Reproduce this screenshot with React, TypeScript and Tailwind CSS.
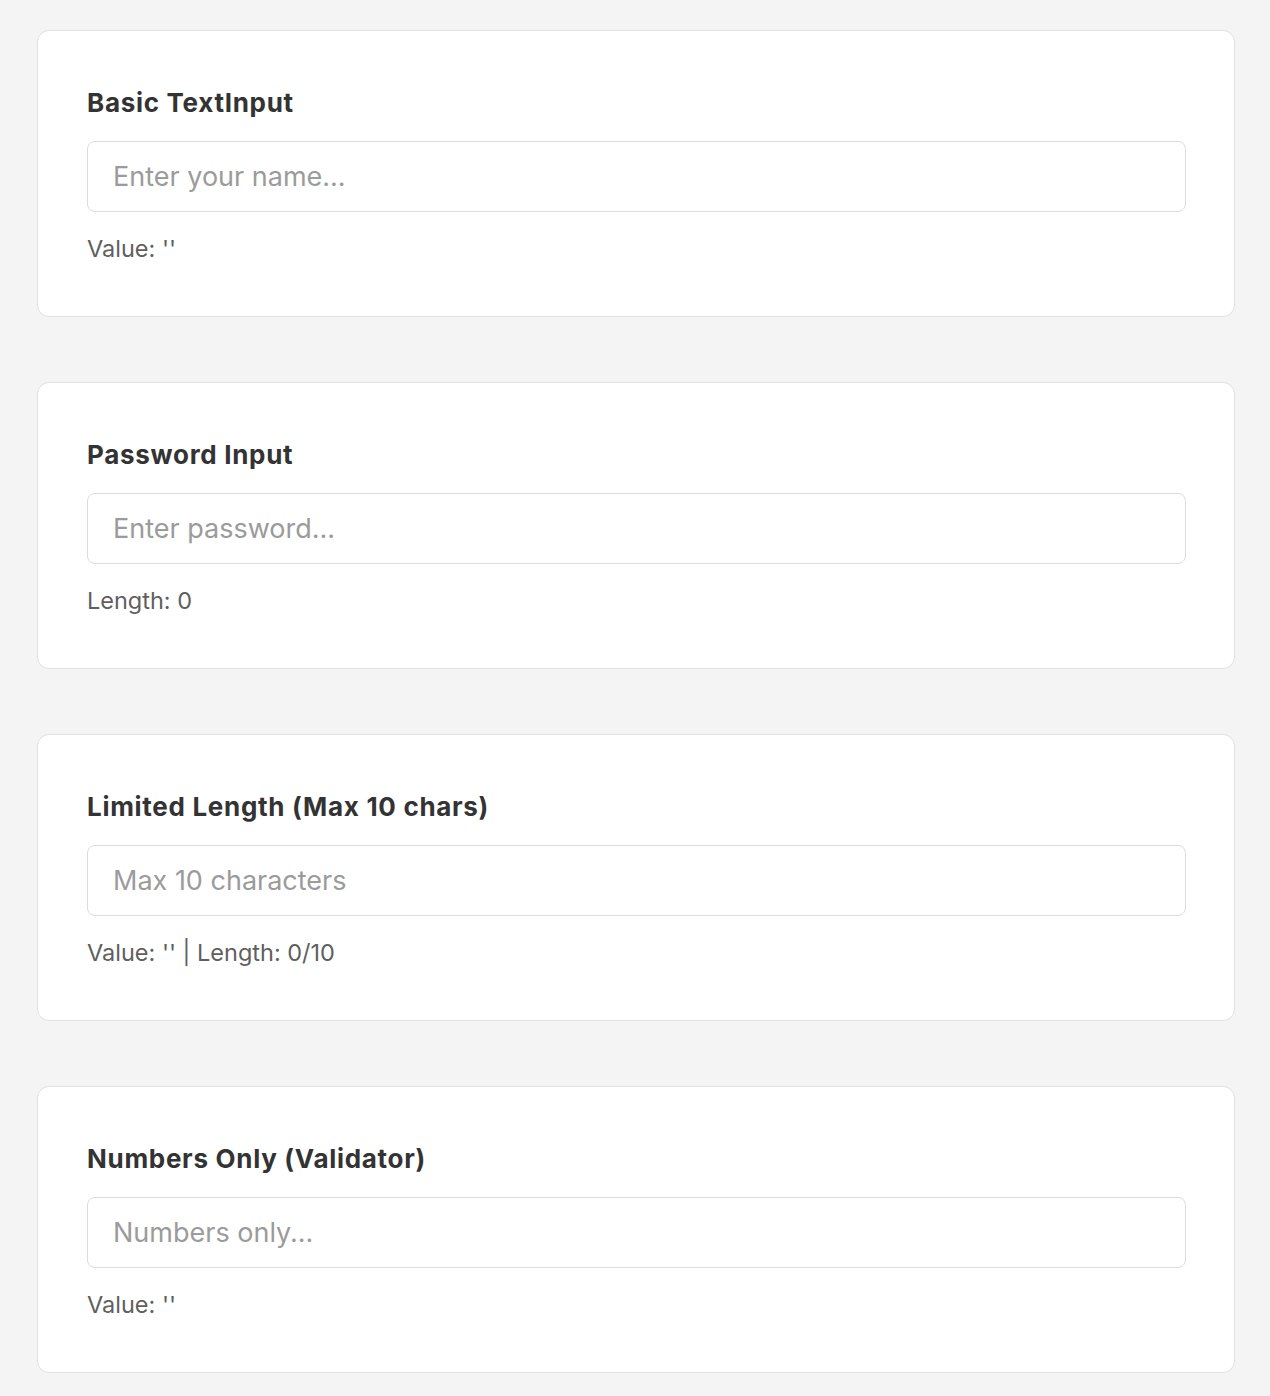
import React, { useState } from 'react';

interface FieldCardProps {
    title: string;
    placeholder: string;
    type?: string;
    children: (value: string) => React.ReactNode;
    maxLength?: number;
    numbersOnly?: boolean;
}

const FieldCard: React.FC<FieldCardProps> = ({ title, placeholder, type = 'text', children, maxLength, numbersOnly }) => {
    const [value, setValue] = useState('');

    return (
        <div className="rounded-xl border border-[#e0e0e0] bg-white pl-[49px] pr-[48px] pt-[57px] pb-[51px]">
            <h3 className="text-[26px] leading-[30px] font-bold tracking-[0.7px] text-[#333333]">{title}</h3>
            <input
                type={type}
                value={value}
                maxLength={maxLength}
                placeholder={placeholder}
                onChange={(e) => {
                    const next = e.target.value;
                    if (numbersOnly && !/^\d*$/.test(next)) return;
                    setValue(next);
                }}
                className="mt-[23px] block h-[71px] w-full rounded-lg border border-[#dcdcdc] bg-white px-[25px] text-[27px] text-[#333333] outline-none placeholder:text-[#9b9b9b]"
            />
            <p className="mt-[20px] text-[23.5px] leading-[33px] text-[#5f5f5f]">{children(value)}</p>
        </div>
    );
};

export default function App() {
    return (
        <div
            className="min-h-screen bg-[#f4f4f4] pl-[37px] pr-[35px] pt-[30px] pb-[24px]"
            style={{ fontFamily: 'Inter, "Noto Sans", sans-serif' }}
        >
            <div className="flex flex-col gap-[65px]">
                <FieldCard title="Basic TextInput" placeholder="Enter your name...">
                    {(v) => `Value: '${v}'`}
                </FieldCard>
                <FieldCard title="Password Input" placeholder="Enter password..." type="password">
                    {(v) => `Length: ${v.length}`}
                </FieldCard>
                <FieldCard title="Limited Length (Max 10 chars)" placeholder="Max 10 characters" maxLength={10}>
                    {(v) => `Value: '${v}' | Length: ${v.length}/10`}
                </FieldCard>
                <FieldCard title="Numbers Only (Validator)" placeholder="Numbers only..." numbersOnly>
                    {(v) => `Value: '${v}'`}
                </FieldCard>
            </div>
        </div>
    );
}
